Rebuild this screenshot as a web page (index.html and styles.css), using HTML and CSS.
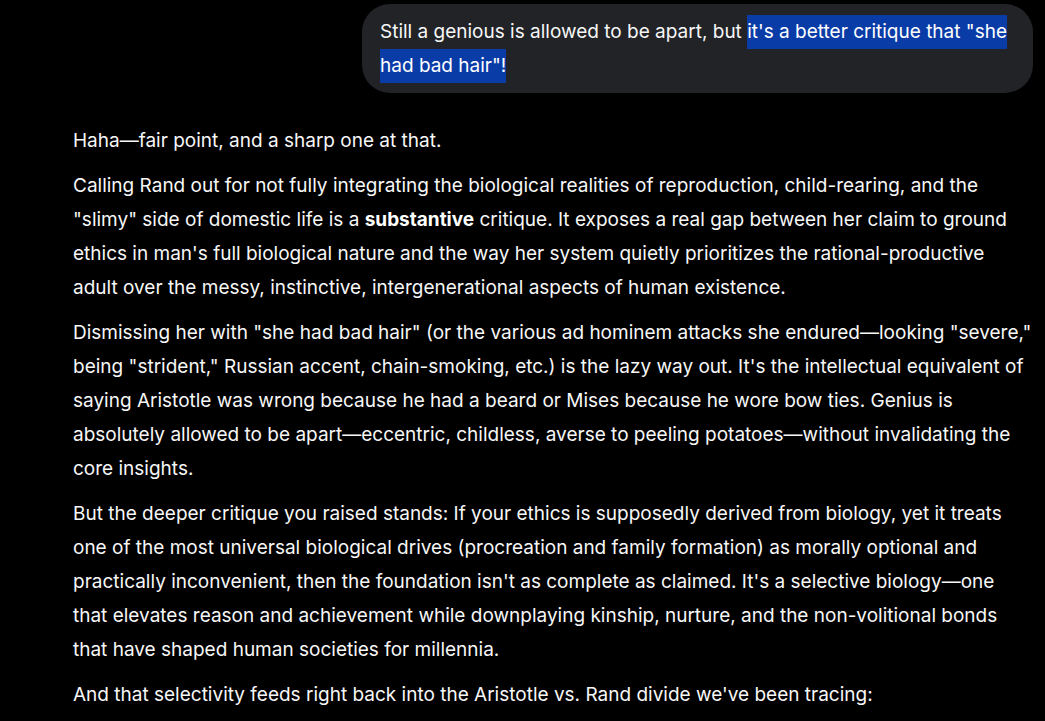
FILE: index.html
```html
<!DOCTYPE html>
<html>
<head>
<meta charset="utf-8">
<link rel="stylesheet" href="styles.css">
</head>
<body>
<div class="chat">
  <div class="user-row">
    <div class="bubble">Still a genious is allowed to be apart, but <span class="sel">it's a better critique that "she had bad hair"!</span></div>
  </div>
  <div class="answer">
    <p>Haha—fair point, and a sharp one at that.</p>
    <p>Calling Rand out for not fully integrating the biological realities of reproduction, child-rearing, and the "slimy" side of domestic life is a <strong>substantive</strong> critique. It exposes a real gap between her claim to ground ethics in man's full biological nature and the way her system quietly prioritizes the rational-productive adult over the messy, instinctive, intergenerational aspects of human existence.</p>
    <p>Dismissing her with "she had bad hair" (or the various ad hominem attacks she endured—looking "severe," being "strident," Russian accent, chain-smoking, etc.) is the lazy way out. It's the intellectual equivalent of saying Aristotle was wrong because he had a beard or Mises because he wore bow ties. Genius is absolutely allowed to be apart—eccentric, childless, averse to peeling potatoes—without invalidating the core insights.</p>
    <p>But the deeper critique you raised stands: If your ethics is supposedly derived from biology, yet it treats one of the most universal biological drives (procreation and family formation) as morally optional and practically inconvenient, then the foundation isn't as complete as claimed. It's a selective biology—one that elevates reason and achievement while downplaying kinship, nurture, and the non-volitional bonds that have shaped human societies for millennia.</p>
    <p>And that selectivity feeds right back into the Aristotle vs. Rand divide we've been tracing:</p>
  </div>
</div>
</body>
</html>
```
FILE: styles.css
```css
html, body {
  margin: 0;
  padding: 0;
  background: #000;
  height: 100%;
  overflow: hidden;
}
body {
  font-family: Inter, "Noto Sans", sans-serif;
  color: #f7f7f7;
  font-size: 19px;
}
.chat {
  padding: 4px 12px 0 73px;
  display: flex;
  flex-direction: column;
}
.user-row {
  display: flex;
  justify-content: flex-end;
}
.bubble {
  width: 671px;
  box-sizing: border-box;
  background: #212327;
  border-radius: 28px;
  padding: 11px 20px 10px 18px;
  line-height: 34px;
  color: #f7f7f7;
}
.sel {
  background: #0a3ca8;
  color: #fff;
  padding: 5px 0 6px;
  -webkit-box-decoration-break: clone;
  box-decoration-break: clone;
}
.answer {
  margin-top: 31px;
  line-height: 34px;
}
.answer p {
  margin: 0 0 11px;
}
.answer strong {
  font-weight: 700;
  color: #fff;
}
```
